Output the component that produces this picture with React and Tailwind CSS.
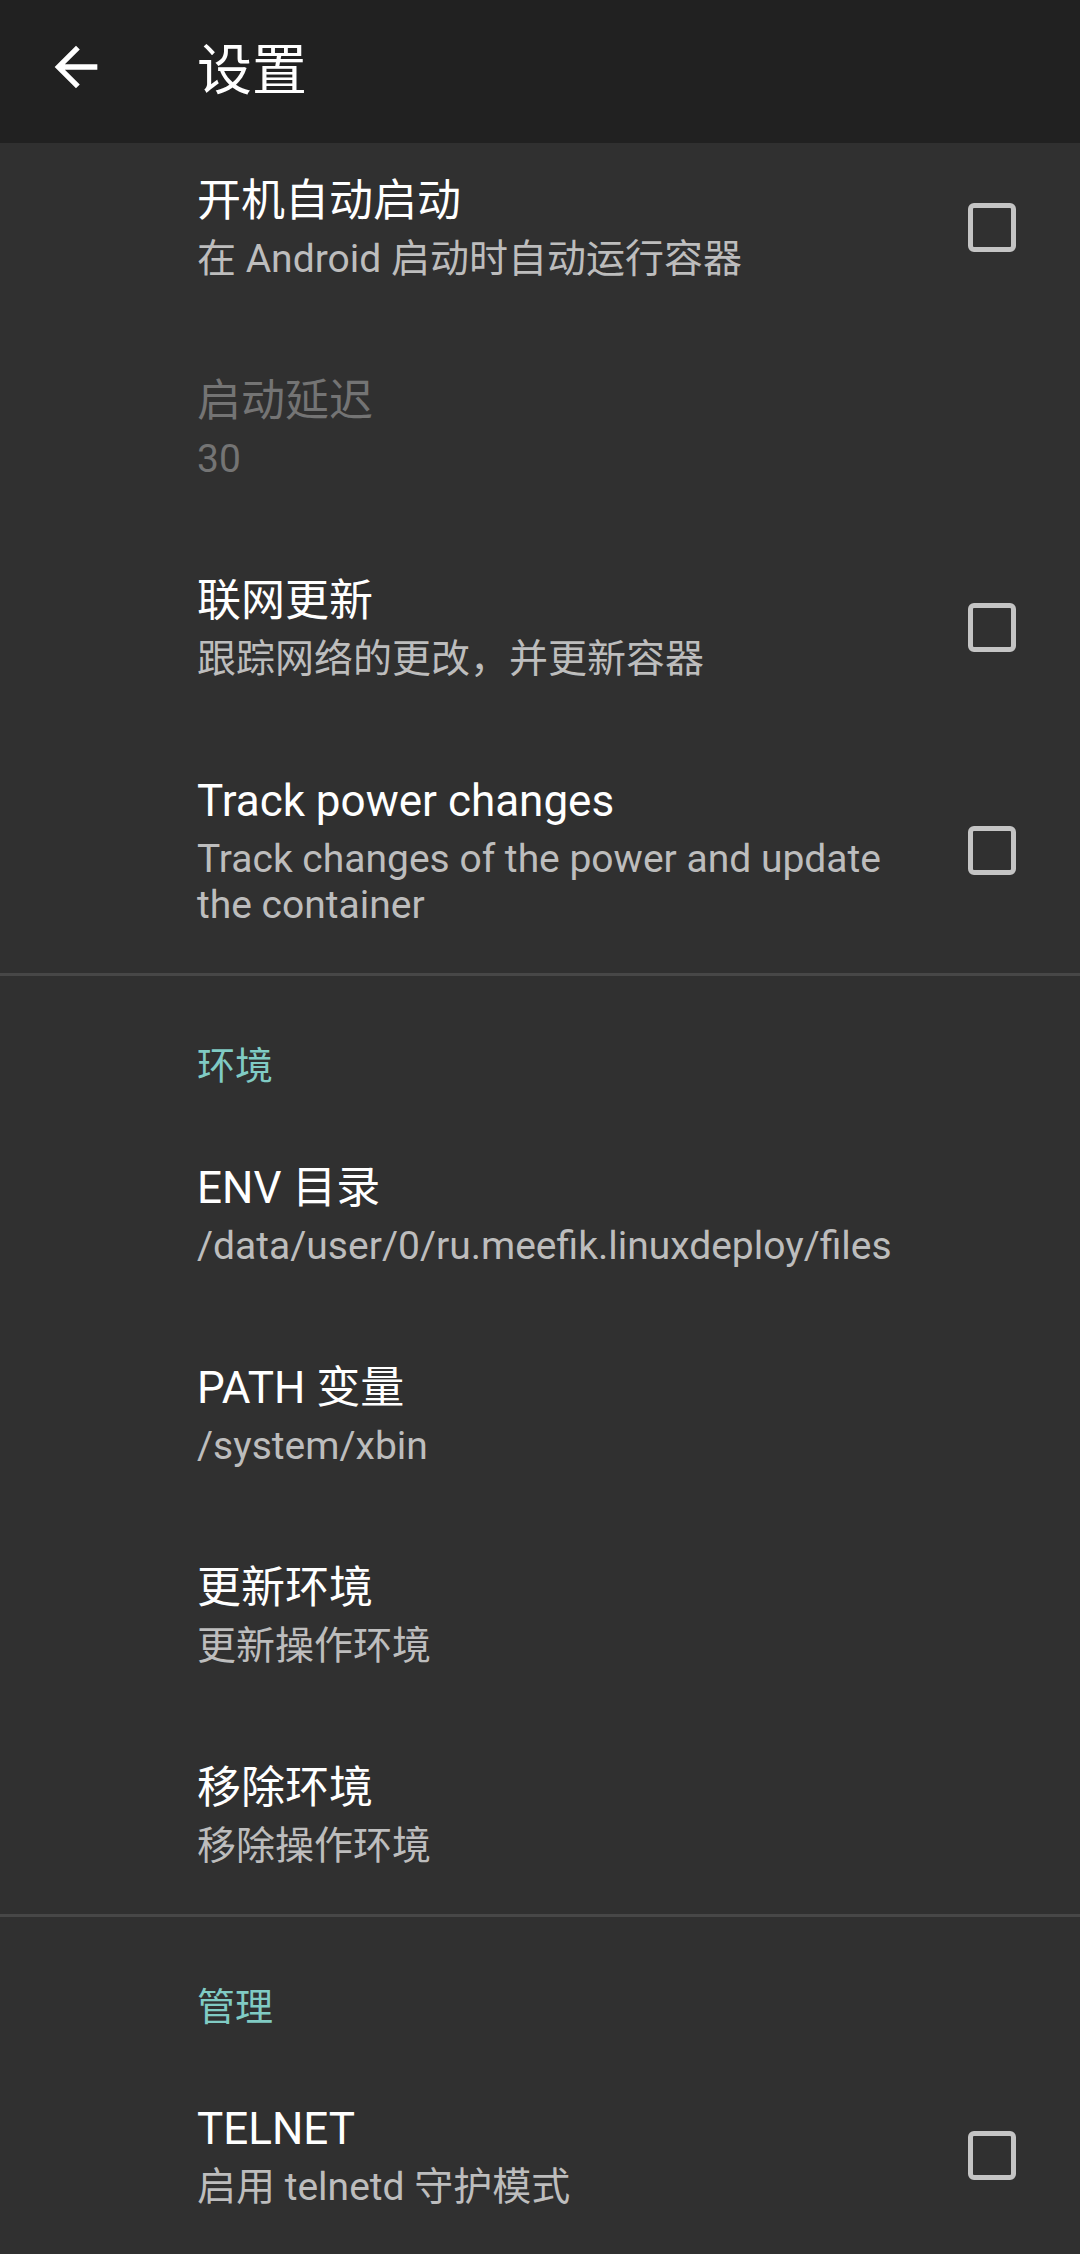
import React from "react";

const BackArrow = () => (
  <svg viewBox="0 0 24 24" className="w-[64px] h-[64px] fill-white">
    <path d="M20 11H7.83l5.59-5.59L12 4l-8 8 8 8 1.41-1.41L7.83 13H20v-2z" />
  </svg>
);

const CheckBox = () => (
  <div className="ml-[42px] w-[48px] h-[49px] shrink-0 rounded-[6px] border-[5px] border-[#c4c4c4]" />
);

const PrefRow = ({ title, summary, checkbox, disabled, first }) => (
  <div
    className={`flex items-center pl-[197px] pr-[64px] pb-[45px] ${
      first ? "pt-[29px]" : "pt-[45px]"
    }`}
  >
    <div className="flex-1 min-w-0">
      <div
        className={`text-[44px] leading-[58px] ${
          disabled ? "text-[#747474]" : "text-white"
        }`}
      >
        {title}
      </div>
      <div
        className={`mt-[6px] text-[39px] leading-[46px] ${
          disabled ? "text-[#747474]" : "text-[#bdbdbd]"
        }`}
      >
        {summary}
      </div>
    </div>
    {checkbox && <CheckBox />}
  </div>
);

const Category = ({ label }) => (
  <div className="pl-[197px] pt-[67px] pb-[25px] text-[38px] leading-[46px] text-[#80cbc4]">
    {label}
  </div>
);

const Divider = () => <div className="h-[3px] bg-[#474747]" />;

export default function App() {
  return (
    <div className="h-[2254px] overflow-hidden bg-[#303030] font-['Roboto','Noto_Sans_CJK_SC',sans-serif]">
      {/* Toolbar */}
      <div className="h-[143px] bg-[#212121] flex items-center">
        <div className="ml-[44px] -mt-[10px]">
          <BackArrow />
        </div>
        <div className="ml-[89px] -mt-[4px] text-[55px] leading-[64px] text-white">
          设置
        </div>
      </div>

      {/* List */}
      <PrefRow
        first
        title="开机自动启动"
        summary="在 Android 启动时自动运行容器"
        checkbox
      />
      <PrefRow title="启动延迟" summary="30" disabled />
      <PrefRow
        title="联网更新"
        summary="跟踪网络的更改，并更新容器"
        checkbox
      />
      <PrefRow
        title="Track power changes"
        summary="Track changes of the power and update the container"
        checkbox
      />
      <Divider />

      <Category label="环境" />
      <PrefRow
        title="ENV 目录"
        summary="/data/user/0/ru.meefik.linuxdeploy/files"
      />
      <PrefRow title="PATH 变量" summary="/system/xbin" />
      <PrefRow title="更新环境" summary="更新操作环境" />
      <PrefRow title="移除环境" summary="移除操作环境" />
      <Divider />

      <Category label="管理" />
      <PrefRow title="TELNET" summary="启用 telnetd 守护模式" checkbox />
    </div>
  );
}
